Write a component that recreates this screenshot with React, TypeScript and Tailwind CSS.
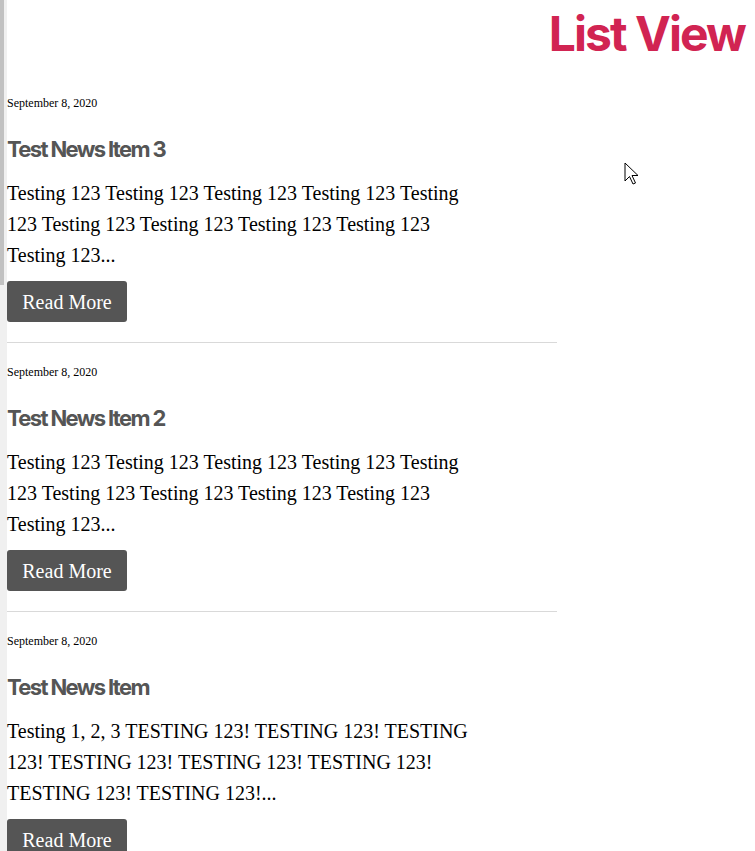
/*
 * News list page — "List View" archive with Read More buttons
 */

const posts = [
  {
    date: "September 8, 2020",
    title: "Test News Item 3",
    excerpt:
      "Testing 123 Testing 123 Testing 123 Testing 123 Testing 123 Testing 123 Testing 123 Testing 123 Testing 123 Testing 123...",
  },
  {
    date: "September 8, 2020",
    title: "Test News Item 2",
    excerpt:
      "Testing 123 Testing 123 Testing 123 Testing 123 Testing 123 Testing 123 Testing 123 Testing 123 Testing 123 Testing 123...",
  },
  {
    date: "September 8, 2020",
    title: "Test News Item",
    excerpt:
      "Testing 1, 2, 3 TESTING 123! TESTING 123! TESTING 123! TESTING 123! TESTING 123! TESTING 123! TESTING 123! TESTING 123!...",
  },
];

const serif = "font-['Liberation_Serif','Times_New_Roman',serif]";

function PostItem({ post }: { post: (typeof posts)[number] }) {
  return (
    <article className="w-[550px] border-b border-[#d9d9d9] pt-[21px] pb-[20px]">
      <p className={`${serif} text-[12px] leading-[16px] text-black`}>{post.date}</p>
      <h2 className="mt-[24px] font-['Inter',sans-serif] text-[22px] leading-[28px] font-bold tracking-[-0.075em] text-[#555555]">
        {post.title}
      </h2>
      <p className={`${serif} mt-[15px] max-w-[485px] text-[20px] leading-[31px] text-black`}>
        {post.excerpt}
      </p>
      <button
        className={`${serif} mt-[10px] flex h-[41px] w-[120px] items-center justify-center rounded-[3px] bg-[#555555] text-[20px] text-white`}
      >
        Read More
      </button>
    </article>
  );
}

export default function App() {
  return (
    <div className="relative flex h-[851px] overflow-hidden bg-white">
      {/* scrollbar strip */}
      <div className="w-[7px] shrink-0 bg-[#f0f0f0]">
        <div className="h-[285px] w-[4px] bg-[#c1c1c1]" />
      </div>

      <main className="flex-1">
        <header className="flex justify-end pt-[9px] pb-[16px] pr-[10px]">
          <h1 className="font-['Inter',sans-serif] text-[48px] leading-[49px] font-bold tracking-[-0.04em] text-[#d12452]">
            List View
          </h1>
        </header>

        {posts.map((post) => (
          <PostItem key={post.title} post={post} />
        ))}
      </main>

      {/* mouse pointer */}
      <svg className="absolute left-[624px] top-[162px]" width="18" height="26" viewBox="0 0 18 26">
        <path d="M1 1 L1 19 L5.5 14.5 L9 22 L11.5 21 L8 13.5 L14 13.5 Z" fill="white" stroke="black" strokeWidth="1" strokeLinejoin="round" />
      </svg>
    </div>
  );
}
